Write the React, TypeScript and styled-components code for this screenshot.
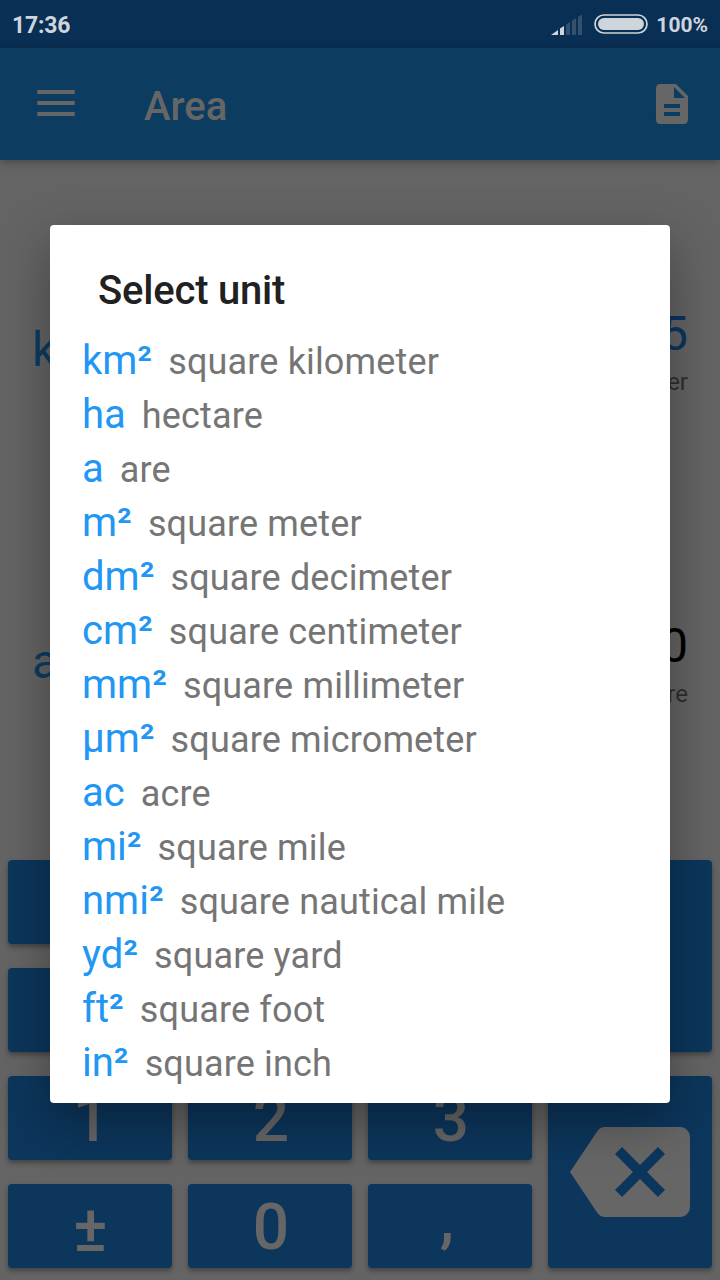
import React from 'react';
import styled, { createGlobalStyle } from 'styled-components';

const GlobalStyle = createGlobalStyle`
  *, *::before, *::after { box-sizing: border-box; }
  body { margin: 0; background: #646464; font-family: Roboto, sans-serif; }
`;

const Screen = styled.div`
  position: relative;
  display: flex;
  flex-direction: column;
  width: 720px;
  height: 1280px;
  overflow: hidden;
  background: #646464;
`;

const StatusBar = styled.header`
  display: flex;
  align-items: center;
  flex: none;
  height: 48px;
  padding: 2px 12px 0;
  background: #0a2f54;
  color: #ced5dd;
`;

const Clock = styled.span`
  flex: 1;
  padding-top: 2px;
  font-size: 23px;
  font-weight: 700;
  letter-spacing: -0.2px;
  line-height: 28px;
`;

const Signal = styled.svg`
  display: block;
  width: 32px;
  height: 22px;
  margin-right: 11px;
`;

const Battery = styled.svg`
  display: block;
  width: 54px;
  height: 20px;
  margin: 0 8px 2px 0;
`;

const Charge = styled.span`
  font-size: 21px;
  font-weight: 700;
  line-height: 28px;
`;

const AppBar = styled.div`
  display: flex;
  align-items: center;
  flex: none;
  height: 112px;
  padding: 0 24px 0 32px;
  background: #0d3c61;
  box-shadow: 0 2px 8px rgba(0, 0, 0, 0.3);
`;

const MenuIcon = styled.svg`
  display: block;
  width: 48px;
  height: 48px;
`;

const AppTitle = styled.h1`
  flex: 1;
  margin: 6px 0 0 64px;
  color: #666;
  font-size: 40px;
  font-weight: 500;
  line-height: 48px;
`;

const DocumentIcon = styled.svg`
  display: block;
  width: 48px;
  height: 48px;
  fill: #666;
`;

const Displays = styled.main`
  display: flex;
  flex-direction: column;
  flex: none;
  height: 700px;
  padding: 140px 32px 0;
  gap: 212px;
`;

const Display = styled.section`
  display: flex;
  justify-content: space-between;
  height: 100px;
`;

const DisplayUnit = styled.div`
  padding-top: 22px;
  color: #0d3c61;
  font-size: 48px;
  line-height: 56px;
`;

const Reading = styled.div`
  display: flex;
  flex-direction: column;
  align-items: flex-end;
`;

const Value = styled.div<{ $active?: boolean }>`
  padding-top: 5px;
  color: ${({ $active }) => ($active ? '#0b3461' : '#000')};
  font-size: 48px;
  line-height: 58px;
`;

const ValueLabel = styled.div`
  margin-top: 5px;
  color: #2f2f2f;
  font-size: 24px;
  line-height: 28px;
`;

const Keypad = styled.div`
  display: grid;
  grid-template-columns: repeat(4, 164px);
  grid-template-rows: repeat(4, 84px);
  gap: 24px 16px;
  flex: none;
  padding: 0 8px 12px;
`;

const Key = styled.button<{ $tall?: boolean; $inset?: string }>`
  display: flex;
  align-items: center;
  justify-content: center;
  grid-row: ${({ $tall }) => ($tall ? 'span 2' : 'auto')};
  padding: ${({ $inset = '4px 0 0 2px' }) => $inset};
  border: 0;
  border-radius: 4px;
  background: #0c365c;
  color: #666;
  box-shadow: 0 3px 5px rgba(0, 0, 0, 0.32);
  font: 500 64px/76px Roboto, sans-serif;
`;

const BackspaceIcon = styled.svg`
  display: block;
  width: 120px;
  height: 120px;
  fill: #666;
`;

const Dialog = styled.div`
  position: absolute;
  top: 225px;
  left: 50px;
  width: 620px;
  height: 878px;
  padding: 42px 32px 0;
  border-radius: 4px;
  background: #fff;
  box-shadow: 0 18px 50px rgba(0, 0, 0, 0.34);
`;

const DialogTitle = styled.h2`
  margin: 0 16px 19px;
  color: #212121;
  font-size: 40px;
  font-weight: 500;
  letter-spacing: -0.2px;
  line-height: 48px;
`;

const UnitList = styled.ul`
  margin: 0;
  padding: 0;
  list-style: none;
`;

const UnitRow = styled.li`
  display: flex;
  align-items: baseline;
  gap: 16px;
  height: 54px;
  line-height: 54px;
  white-space: nowrap;
`;

const UnitCode = styled.span`
  color: #2196f3;
  font-size: 40px;
`;

const Power = styled.span`
  font-weight: 500;
`;

const UnitName = styled.span`
  color: #757575;
  font-size: 36px;
  letter-spacing: 0.16px;
`;

const units = [
  { code: 'km', squared: true, name: 'square kilometer' },
  { code: 'ha', name: 'hectare' },
  { code: 'a', name: 'are' },
  { code: 'm', squared: true, name: 'square meter' },
  { code: 'dm', squared: true, name: 'square decimeter' },
  { code: 'cm', squared: true, name: 'square centimeter' },
  { code: 'mm', squared: true, name: 'square millimeter' },
  { code: 'µm', squared: true, name: 'square micrometer' },
  { code: 'ac', name: 'acre' },
  { code: 'mi', squared: true, name: 'square mile' },
  { code: 'nmi', squared: true, name: 'square nautical mile' },
  { code: 'yd', squared: true, name: 'square yard' },
  { code: 'ft', squared: true, name: 'square foot' },
  { code: 'in', squared: true, name: 'square inch' },
];

export default function App() {
  return (
    <Screen>
      <GlobalStyle />
      <StatusBar>
        <Clock>17:36</Clock>
        <Signal viewBox="0 0 32 22">
          <g fill="#ced5dd">
            <path d="M0 21 L7 16 V21Z" />
            <path d="M9 14.5 L13 12 V21 H9Z" />
          </g>
          <g fill="#34506f">
            <path d="M15 10.5 L19 8 V21 H15Z" />
            <path d="M21 7 L25 4 V21 H21Z" />
            <path d="M27 3 L31 0.5 V21 H27Z" />
          </g>
        </Signal>
        <Battery viewBox="0 0 54 20">
          <rect x="1" y="1" width="52" height="18" rx="9" fill="none" stroke="#ced5dd" strokeWidth="1.7" />
          <rect x="4" y="4" width="46" height="12" rx="6" fill="#ced5dd" />
        </Battery>
        <Charge>100%</Charge>
      </StatusBar>
      <AppBar>
        <MenuIcon viewBox="0 0 48 48">
          <path d="M5.3 10h37.4v4H5.3z M5.3 21h37.4v4H5.3z M5.3 32h37.4v4H5.3z" fill="#666" />
        </MenuIcon>
        <AppTitle>Area</AppTitle>
        <DocumentIcon viewBox="0 0 24 24">
          <path d="M14 2H6c-1.1 0-1.99.9-1.99 2L4 20c0 1.1.89 2 1.99 2H18c1.1 0 2-.9 2-2V8l-6-6zm2 16H8v-2h8v2zm0-4H8v-2h8v2zm-3-5V3.5L18.5 9H13z" />
        </DocumentIcon>
      </AppBar>
      <Displays>
        <Display>
          <DisplayUnit>km²</DisplayUnit>
          <Reading>
            <Value $active>5</Value>
            <ValueLabel>square kilometer</ValueLabel>
          </Reading>
        </Display>
        <Display>
          <DisplayUnit>a</DisplayUnit>
          <Reading>
            <Value>0</Value>
            <ValueLabel>are</ValueLabel>
          </Reading>
        </Display>
      </Displays>
      <Keypad>
        <Key />
        <Key />
        <Key />
        <Key $tall />
        <Key />
        <Key />
        <Key />
        <Key>1</Key>
        <Key>2</Key>
        <Key>3</Key>
        <Key $tall $inset="0">
          <BackspaceIcon viewBox="0 0 24 24">
            <path d="M22 3H7c-.69 0-1.23.35-1.59.88L0 12l5.41 8.11c.36.53.9.89 1.59.89h15c1.1 0 2-.9 2-2V5c0-1.1-.9-2-2-2zm-3 12.59L17.59 17 14 13.41 10.41 17 9 15.59 12.59 12 9 8.41 10.41 7 14 10.59 17.59 7 19 8.41 15.41 12 19 15.59z" />
          </BackspaceIcon>
        </Key>
        <Key $inset="7px 0 0 1px">±</Key>
        <Key>0</Key>
        <Key $inset="0 6px 14px 0">,</Key>
      </Keypad>
      <Dialog role="dialog">
        <DialogTitle>Select unit</DialogTitle>
        <UnitList>
          {units.map(({ code, squared, name }) => (
            <UnitRow key={name}>
              <UnitCode>
                {code}
                {squared && <Power>²</Power>}
              </UnitCode>
              <UnitName>{name}</UnitName>
            </UnitRow>
          ))}
        </UnitList>
      </Dialog>
    </Screen>
  );
}
